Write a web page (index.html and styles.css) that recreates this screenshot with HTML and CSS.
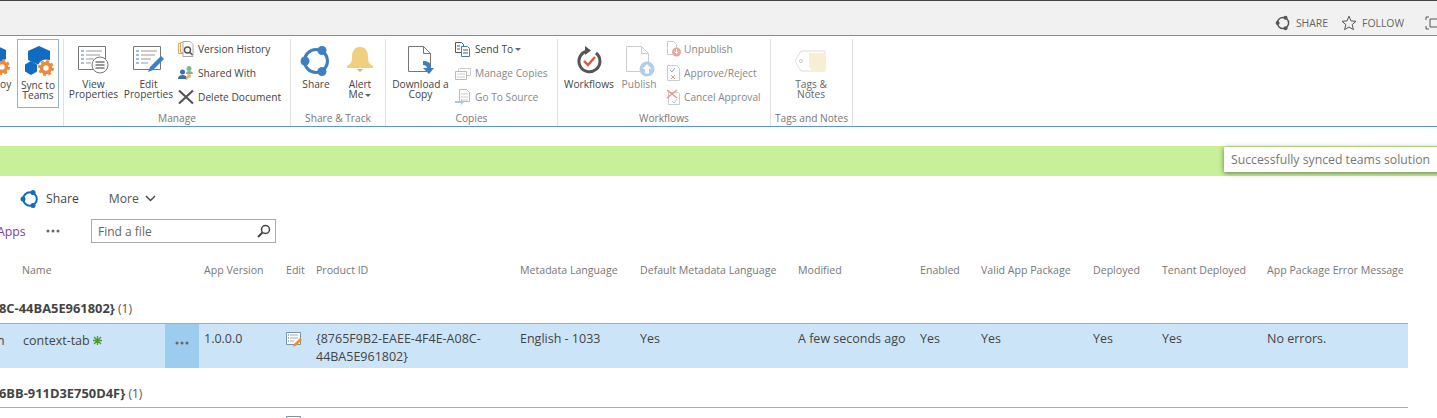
FILE: index.html
```html
<!DOCTYPE html>
<html lang="en">
<head>
    <meta charset="UTF-8">
    <meta name="viewport" content="width=device-width, initial-scale=1.0">
    <title>Apps for SharePoint</title>
    <link rel="stylesheet" href="styles.css">
</head>
<body>
    <div class="topbar">
        <span class="top-link">
            <svg width="16" height="16" viewBox="0 0 16 16"><circle cx="8" cy="8" r="5.6" fill="none" stroke="#555" stroke-width="1.5"/><circle cx="10.5" cy="2.8" r="2" fill="#555"/><circle cx="2.6" cy="8" r="2" fill="#555"/><circle cx="10.5" cy="13.2" r="2" fill="#555"/></svg>
            SHARE
        </span>
        <span class="top-link">
            <svg width="16" height="16" viewBox="0 0 16 16"><path d="M8 1.2l2 4.7 5 .4-3.800 3.300 1.200 5L8 12l-4.400 2.600 1.200-5L1 6.300l5-.4z" fill="none" stroke="#555"/></svg>
            FOLLOW
        </span>
        <svg class="focus-icon" width="16" height="14" viewBox="0 0 16 14"><path d="M4 1H1v3M1 10v3h3M16 3H5v8h11" fill="none" stroke="#555"/></svg>
    </div>

    <div class="ribbon">
        <section class="group group-first">
            <div class="group-items">
                <div class="big cut-off">
                    <svg width="10" height="32" viewBox="22 0 10 32"><path d="M17 0l11 5v9l-11 5-11-5V5z" fill="#0f6cc0"/><circle cx="24" cy="22" r="4.5" fill="none" stroke="#e98a3c" stroke-width="3.6"/><circle cx="24" cy="22" r="7" fill="none" stroke="#e98a3c" stroke-width="2" stroke-dasharray="3 2.500"/></svg>
                    <span>oy</span>
                </div>
                <div class="big selected">
                    <svg width="32" height="32" viewBox="0 0 32 32"><path d="M17 0l11 5v9l-11 5-11-5V5z" fill="#0f6cc0"/><path d="M9 15l6 3.500v7L9 29l-6-3.500v-7z" fill="#0f6cc0"/><circle cx="24" cy="22" r="8.500" fill="#fff"/><circle cx="24" cy="22" r="4.500" fill="none" stroke="#e98a3c" stroke-width="3.600"/><circle cx="24" cy="22" r="7" fill="none" stroke="#e98a3c" stroke-width="2" stroke-dasharray="3 2.500"/></svg>
                    <span>Sync to<br>Teams</span>
                </div>
            </div>
        </section>

        <section class="group group-manage">
            <div class="group-items">
                <div class="big wide">
                    <svg width="32" height="32" viewBox="0 0 32 32"><path d="M.5 1.500h27v23H.5z" fill="#fff" stroke="#777"/><path d="M3 6h3M3 10h3M3 14h3M3 18h3" stroke="#3b7fc4"/><path d="M8 6h16M8 10h14M8 14h8M8 18h5" stroke="#999"/><circle cx="22" cy="20" r="8" fill="#fff" stroke="#777"/><path d="M17.500 17h9M17.500 20h9M17.500 23h9" stroke="#777" stroke-width="1.500"/></svg>
                    <span>View<br>Properties</span>
                </div>
                <div class="big wide">
                    <svg width="32" height="32" viewBox="0 0 32 32"><path d="M.5 1.500h27v23H.5z" fill="#fff" stroke="#777"/><path d="M3 6h3M3 10h3M3 14h3M3 18h3" stroke="#3b7fc4"/><path d="M8 6h16M8 10h14M8 14h10M8 18h7" stroke="#999"/><path d="M15 27l2-5 11-11 3 3-11 11z" fill="#3b7fc4"/></svg>
                    <span>Edit<br>Properties</span>
                </div>
                <div class="small-stack stack-manage">
                    <div class="small">
                        <svg width="16" height="16" viewBox="0 0 16 16"><path d="M.5 2.500h6v10h-6z" fill="#fff" stroke="#e0a860"/><path d="M2.500 1.500h6v10h-6z" fill="#fff" stroke="#e0a860"/><path d="M5 .5h7l3 3v12H5z" fill="#fff" stroke="#aaa"/><circle cx="9.500" cy="9" r="3" fill="none" stroke="#555" stroke-width="1.400"/><path d="M11.500 11l3 3" stroke="#555" stroke-width="1.600"/></svg>
                        Version History
                    </div>
                    <div class="small">
                        <svg width="16" height="16" viewBox="0 0 16 16"><circle cx="4.500" cy="7" r="2.500" fill="#3b6fb0"/><path d="M0 14c0-3 2-4 4.500-4S9 11 9 14z" fill="#3b6fb0"/><circle cx="11" cy="3.500" r="2.500" fill="#7ab89a"/><path d="M8 9c0-2 1-3 3-3s4 1 4 3z" fill="#7ab89a"/><circle cx="11" cy="11" r="2" fill="#eab565"/><path d="M10 12l-2 3" stroke="#eab565" stroke-width="1.500"/></svg>
                        Shared With
                    </div>
                    <div class="small">
                        <svg width="16" height="16" viewBox="0 0 16 16"><path d="M1 1.500l14 13M15 1.500l-14 13" stroke="#555" stroke-width="2.200"/></svg>
                        Delete Document
                    </div>
                </div>
            </div>
            <div class="group-label">Manage</div>
        </section>

        <section class="group group-share">
            <div class="group-items">
                <div class="big share">
                    <svg width="32" height="32" viewBox="0 0 32 32"><circle cx="16" cy="16" r="11.500" fill="none" stroke="#3f7fbf" stroke-width="3"/><circle cx="22" cy="5.500" r="4.500" fill="#3f7fbf"/><circle cx="5" cy="16" r="4.500" fill="#3f7fbf"/><circle cx="22" cy="26.500" r="4.500" fill="#3f7fbf"/></svg>
                    <span>Share</span>
                </div>
                <div class="big alert">
                    <svg width="32" height="32" viewBox="0 0 32 32"><path d="M16 2c6 0 8 5 8 10 0 5 1 7 5 9v2H3v-2c4-2 5-4 5-9 0-5 2-10 8-10z" fill="#f0cf7e"/><path d="M13 24h6l-3 3z" fill="#d8b35f"/></svg>
                    <span>Alert<br>Me<i class="caret"></i></span>
                </div>
            </div>
            <div class="group-label">Share &amp; Track</div>
        </section>

        <section class="group group-copies">
            <div class="group-items">
                <div class="big download">
                    <svg width="32" height="32" viewBox="0 0 32 32"><path d="M3.500 1.500h15l7 7v18h-22z" fill="#fff" stroke="#777"/><path d="M18.500 1.500v7h7" fill="none" stroke="#777"/><path d="M18 16c6 0 8 2 8 7h3l-5 6-6-6h4c0-2-2-3-4-3z" fill="#3f7fbf"/></svg>
                    <span>Download a<br>Copy</span>
                </div>
                <div class="small-stack">
                    <div class="small">
                        <svg width="16" height="16" viewBox="0 0 16 16"><path d="M.5 1.500h6l2 2v8h-8z" fill="#fff" stroke="#555"/><path d="M6.500 5.500h6l2 2v8h-8z" fill="#fff" stroke="#3f7fbf"/><path d="M2 5h3M2 8h3M8 9h5M8 12h5" stroke="#555"/></svg>
                        Send To<i class="caret"></i>
                    </div>
                    <div class="small muted">
                        <svg width="16" height="16" viewBox="0 0 16 16"><path d="M3.500 3.500h12v7h-12z" fill="#fff" stroke="#ccc"/><path d="M.5 6.500h11v8H.5z" fill="#fff" stroke="#bbb"/><path d="M2 9h8M2 12h8" stroke="#ccc"/></svg>
                        Manage Copies
                    </div>
                    <div class="small muted">
                        <svg width="16" height="16" viewBox="0 0 16 16"><path d="M4.500 .5h7l3 3v9h-10z" fill="#fff" stroke="#bbb"/><path d="M6 5h7M6 8h7M6 11h7" stroke="#ccc"/><path d="M0 12h6V10l3 3-3 3v-2H0z" fill="#a9c6e4"/></svg>
                        Go To Source
                    </div>
                </div>
            </div>
            <div class="group-label">Copies</div>
        </section>

        <section class="group group-workflows">
            <div class="group-items">
                <div class="big workflows">
                    <svg width="32" height="32" viewBox="0 0 32 32"><path d="M23 8a10.500 10.500 0 1 1-9-2" fill="none" stroke="#555" stroke-width="3"/><path d="M12 1l6 4.500-6 4.500z" fill="#555"/><path d="M11 16l4 4 7-8" fill="none" stroke="#d9573a" stroke-width="2.400"/></svg>
                    <span>Workflows</span>
                </div>
                <div class="big publish muted">
                    <svg width="32" height="32" viewBox="0 0 32 32"><path d="M3.500 1.500h15l7 7v18h-22z" fill="#fff" stroke="#ccc"/><path d="M18.500 1.500v7h7" fill="none" stroke="#ccc"/><circle cx="24" cy="24" r="7.500" fill="#b3cee8"/><path d="M24 19l4.500 5H26v4.500h-4V24h-2.500z" fill="#fff"/></svg>
                    <span>Publish</span>
                </div>
                <div class="small-stack stack-close">
                    <div class="small muted">
                        <svg width="16" height="16" viewBox="0 0 16 16"><path d="M1.500 .5h6l3 3v10h-9z" fill="#fff" stroke="#ccc"/><circle cx="10.500" cy="11" r="4.500" fill="#eba79a"/><path d="M10.500 8v4M8.500 10.500l2 2 2-2" stroke="#fff" fill="none"/></svg>
                        Unpublish
                    </div>
                    <div class="small muted">
                        <svg width="16" height="16" viewBox="0 0 16 16"><path d="M1.500 .5h9l3 3v12h-12z" fill="#fff" stroke="#ccc"/><path d="M4 5l2 2 3-4" fill="none" stroke="#7aa7d6"/><path d="M5 10l4 4M9 10l-4 4" stroke="#e59a8c"/></svg>
                        Approve/Reject
                    </div>
                    <div class="small muted">
                        <svg width="16" height="16" viewBox="0 0 16 16"><path d="M2.500 3.500h10l1 1v11h-11z" fill="#fff" stroke="#ccc"/><path d="M1 1l10 8M11 1L1 9" stroke="#e59a8c" stroke-width="1.600"/><path d="M6 12l2 2 3-4" fill="none" stroke="#a9c6e4"/></svg>
                        Cancel Approval
                    </div>
                </div>
            </div>
            <div class="group-label">Workflows</div>
        </section>

        <section class="group group-tags">
            <div class="group-items">
                <div class="big tags">
                    <svg width="32" height="32" viewBox="0 0 32 32"><path d="M6 6h24v20H6L0 16z" fill="#fff" stroke="#ddd"/><circle cx="6" cy="16" r="1.500" fill="none" stroke="#ccc"/><path d="M14 8h16v18H18l-4-4z" fill="#f8edd5"/></svg>
                    <span>Tags &amp;<br>Notes</span>
                </div>
            </div>
            <div class="group-label">Tags and Notes</div>
        </section>
    </div>

    <div class="status-bar"></div>
    <div class="toast">Successfully synced teams solution</div>

    <div class="commands">
        <svg width="20" height="20" viewBox="0 0 20 20"><circle cx="10" cy="10" r="6.800" fill="none" stroke="#0f6cc0" stroke-width="2"/><circle cx="13" cy="3.500" r="2.500" fill="#0f6cc0"/><circle cx="3" cy="10" r="2.500" fill="#0f6cc0"/><circle cx="13" cy="16.500" r="2.500" fill="#0f6cc0"/></svg>
        <span class="cmd-share">Share</span>
        <span class="cmd-more">More</span>
        <svg width="11" height="7" viewBox="0 0 11 7"><path d="M1 1l4.500 4.500L10 1" fill="none" stroke="#444" stroke-width="1.400"/></svg>
    </div>

    <div class="view-row">
        <a class="view-link">Apps</a>
        <svg class="dots" width="14" height="4" viewBox="0 0 14 4"><circle cx="2" cy="2" r="1.500" fill="#666"/><circle cx="7" cy="2" r="1.500" fill="#666"/><circle cx="12" cy="2" r="1.500" fill="#666"/></svg>
        <div class="search">
            <span>Find a file</span>
            <svg width="14" height="14" viewBox="0 0 14 14"><circle cx="8.500" cy="5.500" r="4" fill="none" stroke="#444" stroke-width="1.500"/><path d="M5.500 8.500L1 13" stroke="#444" stroke-width="2"/></svg>
        </div>
    </div>

    <div class="list-head list-grid">
        <span class="c-name">Name</span>
        <span></span>
        <span>App Version</span>
        <span>Edit</span>
        <span>Product ID</span>
        <span>Metadata Language</span>
        <span>Default Metadata Language</span>
        <span>Modified</span>
        <span>Enabled</span>
        <span>Valid App Package</span>
        <span>Deployed</span>
        <span>Tenant Deployed</span>
        <span>App Package Error Message</span>
    </div>

    <div class="group-head"><b>8C-44BA5E961802}</b> (1)</div>
    <div class="list-row list-grid selected-row">
        <span class="c-name"><i class="cut">m</i>context-tab <svg width="9" height="9" viewBox="0 0 9 9"><path d="M4.500 0v9M0 4.500h9M1 1l7 7M8 1l-7 7" stroke="#4a9a2c" stroke-width="1.300"/></svg></span>
        <span class="c-menu"><svg width="14" height="4" viewBox="0 0 14 4"><circle cx="2" cy="2" r="1.500" fill="#666"/><circle cx="7" cy="2" r="1.500" fill="#666"/><circle cx="12" cy="2" r="1.500" fill="#666"/></svg></span>
        <span>1.0.0.0</span>
        <span class="c-edit"><svg width="17" height="16" viewBox="0 0 17 16"><path d="M.5 .5h14v12H.5z" fill="#fff" stroke="#7f93a8"/><path d="M2 3h1M2 6h1M2 9h1" stroke="#3b7fc4"/><path d="M4 3h8M4 6h8M4 9h4" stroke="#aaa"/><path d="M7 15l1.500-3.500L14 6l2 2-5.500 5.500z" fill="#e0933a"/></svg></span>
        <span>{8765F9B2-EAEE-4F4E-A08C-44BA5E961802}</span>
        <span>English - 1033</span>
        <span>Yes</span>
        <span>A few seconds ago</span>
        <span>Yes</span>
        <span>Yes</span>
        <span>Yes</span>
        <span>Yes</span>
        <span>No errors.</span>
    </div>

    <div class="group-head second"><b>6BB-911D3E750D4F}</b> (1)</div>
    <div class="list-row list-grid next-row">
        <span></span>
        <span></span>
        <span></span>
        <span class="c-edit"><svg width="17" height="16" viewBox="0 0 17 16"><path d="M.5 .5h14v12H.5z" fill="#fff" stroke="#7f93a8"/></svg></span>
    </div>
</body>
</html>
```

FILE: styles.css
```css
html, body {
    height: 100%;
    overflow: hidden;
}
body {
    margin: 0;
    position: relative;
    font-family: "Open Sans", "Noto Sans", Arial, sans-serif;
    font-size: 12px;
    color: #444;
    background-color: #fff;
}
.topbar {
    height: 35px;
    box-sizing: border-box;
    border-top: 1px solid #444;
    background-color: #f1f1f1;
    display: flex;
    justify-content: flex-end;
    align-items: center;
    padding-top: 9px;
    margin-right: -4px;
}
.top-link {
    display: flex;
    align-items: center;
    gap: 5px;
    margin-right: 13px;
    font-size: 10.4px;
    color: #666;
}
.focus-icon {
    margin-left: 8px;
}
.ribbon {
    height: 90px;
    border-top: 1px solid #5b94d8;
    border-bottom: 1px solid #5b94d8;
    display: flex;
}
.group {
    border-right: 1px solid #e1e1e1;
    margin-top: 3px;
    height: 87px;
    display: flex;
    flex-direction: column;
    flex: none;
}
.group-first { width: 63px; }
.group-manage { width: 226px; }
.group-share { width: 94px; }
.group-copies { width: 171px; }
.group-workflows { width: 212px; }
.group-tags { width: 81px; }
.group-items {
    display: flex;
    flex: 1;
}
.group-manage .group-items {
    padding-left: 2px;
}
.group-label {
    height: 15px;
    padding-top: 2px;
    text-align: center;
    font-size: 10.2px;
    color: #777;
}
.big {
    width: 46px;
    display: flex;
    flex-direction: column;
    align-items: center;
    font-size: 10.2px;
    line-height: 10px;
    text-align: center;
    padding-top: 6px;
    flex: none;
}
.big svg {
    margin-bottom: 2px;
}
.big.wide { width: 55px; }
.big.share { width: 50px; }
.big.alert { width: 38px; }
.big.download { width: 69px; }
.big.workflows { width: 62px; }
.big.publish { width: 38px; }
.big.tags { width: 80px; color: #666; }
.big.cut-off {
    width: 13px;
    align-items: flex-start;
}
.big.selected {
    box-sizing: border-box;
    width: 42px;
    height: 69px;
    margin-left: 4px;
    border: 1px solid #92b4cf;
    padding-top: 6px;
}
.muted {
    color: #888;
}
.small-stack {
    display: flex;
    flex-direction: column;
    gap: 8px;
    padding-top: 2px;
}
.stack-manage {
    margin-left: 2px;
}
.stack-close {
    margin-left: 8px;
}
.stack-close .small {
    gap: 2px;
}
.small {
    display: flex;
    align-items: center;
    gap: 4px;
    height: 16px;
    font-size: 10.2px;
    white-space: nowrap;
}
.caret {
    display: inline-block;
    border: 3px solid transparent;
    border-top-color: #666;
    border-bottom-width: 0;
    margin-left: 2px;
    vertical-align: middle;
}
.small .caret {
    margin-left: -2px;
}
.status-bar {
    height: 30px;
    margin-top: 19px;
    background-color: #c8f098;
}
.toast {
    position: absolute;
    left: 1224px;
    top: 147px;
    width: 230px;
    height: 25px;
    line-height: 26px;
    padding-left: 7px;
    box-sizing: border-box;
    font-size: 12.25px;
    background-color: #fff;
    color: #777;
    box-shadow: 0 1px 5px rgba(0, 0, 0, 0.5);
}
.commands {
    height: 41px;
    padding-top: 2px;
    display: flex;
    align-items: center;
    padding-left: 20px;
    font-size: 12.2px;
    color: #444;
}
.cmd-share {
    margin: 0 30px 0 6px;
}
.cmd-more {
    margin-right: 6px;
    color: #555;
}
.view-row {
    height: 24px;
    display: flex;
    align-items: center;
}
.view-link {
    color: #7b3ea8;
    margin-left: -3px;
    width: 49px;
    font-size: 12.3px;
}
.dots {
    margin-right: 31px;
}
.search {
    width: 185px;
    height: 24px;
    box-sizing: border-box;
    border: 1px solid #ababab;
    padding: 0 4px 0 6px;
    display: flex;
    justify-content: space-between;
    align-items: center;
    color: #666;
}
.list-grid {
    display: grid;
    grid-template-columns: 165px 34px 82px 30px 204px 120px 158px 122px 61px 112px 69px 105px 146px;
    width: 1408px;
}
.list-head {
    margin-top: 20px;
    font-size: 10.6px;
    line-height: 14px;
    color: #777;
}
.list-head span {
    padding-left: 5px;
    white-space: nowrap;
}
.list-head .c-name {
    padding-left: 22px;
}
.group-head {
    margin-top: 21px;
    height: 25px;
    line-height: 21px;
    color: #555;
}
.group-head b {
    font-size: 12.9px;
    color: #444;
    margin-left: -1px;
}
.group-head.second {
    margin-top: 15px;
    height: 24px;
}
.list-row {
    border-top: 1px solid #ababab;
    height: 44px;
    font-size: 12.5px;
    line-height: 18px;
}
.selected-row {
    background-color: #cce4f7;
}
.next-row {
    height: 10px;
    overflow: hidden;
}
.list-row span {
    padding: 6px 0 0 5px;
}
.list-row .c-name {
    position: relative;
    padding-left: 23px;
    padding-top: 8px;
}
.cut {
    position: absolute;
    left: -7px;
    font-style: normal;
}
.list-row .c-menu {
    background-color: #9ccdef;
    padding: 8px 0 0 10px;
}
.list-row .c-edit {
    padding-top: 8px;
}
```
